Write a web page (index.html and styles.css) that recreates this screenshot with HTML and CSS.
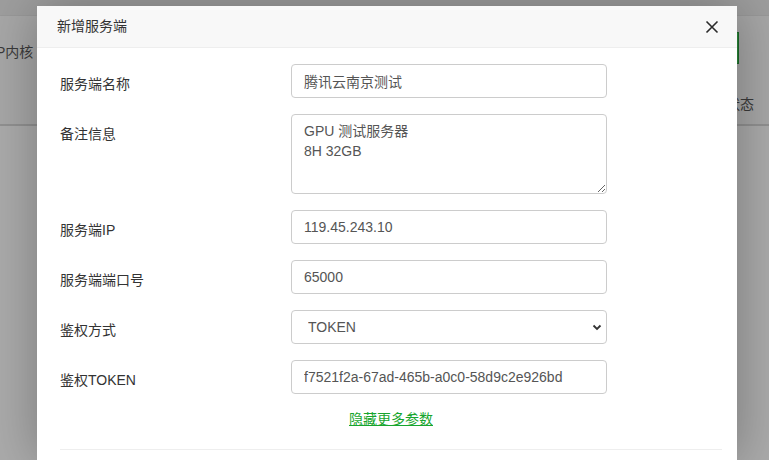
FILE: index.html
```html
<!DOCTYPE html>
<html lang="zh-CN">
<head>
<meta charset="utf-8">
<title>新增服务端</title>
<link rel="stylesheet" href="styles.css">
</head>
<body>
<div class="page">
  <div class="topbar"></div>
  <div class="pagehead">
    <span class="col-left">IP内核</span>
    <div class="head-right">
      <span class="green-btn"></span>
      <span class="col-right">状态</span>
    </div>
  </div>
  <div class="pagerest"></div>
</div>

<div class="modal">
  <div class="modal-title">
    <span>新增服务端</span>
    <button class="close" type="button" aria-label="关闭">
      <svg width="14" height="14" viewBox="0 0 14 14"><path d="M1.5 1.5 L12.5 12.5 M12.5 1.5 L1.5 12.5" stroke="#2b2b2b" stroke-width="1.6" fill="none"/></svg>
    </button>
  </div>
  <div class="modal-body">
    <div class="row">
      <label class="lbl">服务端名称</label>
      <input class="ctl" type="text" value="腾讯云南京测试">
    </div>
    <div class="row">
      <label class="lbl">备注信息</label>
      <textarea class="ctl area">GPU 测试服务器
8H 32GB</textarea>
    </div>
    <div class="row">
      <label class="lbl">服务端IP</label>
      <input class="ctl" type="text" value="119.45.243.10">
    </div>
    <div class="row">
      <label class="lbl">服务端端口号</label>
      <input class="ctl" type="text" value="65000">
    </div>
    <div class="row">
      <label class="lbl">鉴权方式</label>
      <div class="sel-wrap">
        <select class="ctl sel"><option>TOKEN</option></select>
        <svg class="chev" width="10" height="7" viewBox="0 0 10 7"><path d="M1.5 1.5 L5 5 L8.5 1.5" stroke="#333" stroke-width="1.8" fill="none"/></svg>
      </div>
    </div>
    <div class="row">
      <label class="lbl">鉴权TOKEN</label>
      <input class="ctl" type="text" value="f7521f2a-67ad-465b-a0c0-58d9c2e926bd">
    </div>
    <div class="more"><a href="#">隐藏更多参数</a></div>
    <div class="divider"></div>
  </div>
</div>
</body>
</html>
```
FILE: styles.css
```css
html, body {
  margin: 0;
  padding: 0;
  height: 100%;
  overflow: hidden;
}
body {
  font-family: "Liberation Sans", "Noto Sans CJK SC", sans-serif;
  font-size: 14px;
  color: #333;
  background: #ababab;
  position: relative;
}
.page {
  display: flex;
  flex-direction: column;
  height: 460px;
}
.topbar {
  height: 15px;
  background: #9e9e9e;
  border-bottom: 1px solid #999;
}
.pagehead {
  height: 108px;
  background: #a7a7a7;
  border-bottom: 2px solid #919191;
  display: flex;
  justify-content: space-between;
  position: relative;
}
.col-left {
  margin-left: -8px;
  margin-top: 26px;
  font-size: 14px;
  line-height: 20px;
  color: #3a3a3a;
}
.head-right {
  display: flex;
  flex-direction: column;
  align-items: flex-end;
  width: 60px;
}
.green-btn {
  display: block;
  width: 30px;
  height: 30px;
  margin-top: 16px;
  margin-right: 30px;
  border: 1px solid #1d6b2a;
  background: #2a8a3a;
}
.col-right {
  margin-top: 30px;
  margin-right: 15px;
  font-size: 14px;
  line-height: 20px;
  color: #3a3a3a;
}
.pagerest {
  flex: 1;
  background: #ababab;
}

.modal {
  position: absolute;
  left: 37px;
  top: 6px;
  width: 700px;
  height: 454px;
  overflow: hidden;
  background: #fff;
  box-shadow: 1px 1px 50px rgba(0, 0, 0, 0.3);
}
.modal-title {
  height: 41px;
  line-height: 41px;
  background: #f8f8f8;
  border-bottom: 1px solid #eee;
  padding: 0 0 0 20px;
  display: flex;
  justify-content: space-between;
  align-items: center;
  color: #333;
  font-size: 14px;
}
.close {
  border: 0;
  background: none;
  padding: 0;
  margin-right: 18px;
  width: 14px;
  height: 14px;
  display: flex;
  margin-top: 1px;
}
.modal-body {
  padding: 16px 15px 0 23px;
}
.row {
  display: grid;
  grid-template-columns: 231px 316px;
  margin-bottom: 16px;
}
.lbl {
  padding-top: 10px;
  line-height: 20px;
  color: #333;
}
.ctl {
  box-sizing: border-box;
  width: 316px;
  height: 34px;
  padding: 6px 12px;
  font-family: "Liberation Sans", "Noto Sans CJK SC", sans-serif;
  font-size: 14px;
  line-height: 20px;
  color: #555;
  background: #fff;
  border: 1px solid #ccc;
  border-radius: 4px;
  margin: 0;
  outline: none;
}
.area {
  height: 80px;
  resize: vertical;
  display: block;
}
.sel-wrap {
  position: relative;
  width: 316px;
}
.sel {
  appearance: none;
  -webkit-appearance: none;
  padding-left: 16px;
  display: block;
}
.chev {
  position: absolute;
  right: 5px;
  top: 14px;
  pointer-events: none;
}
.more {
  text-align: center;
  line-height: 20px;
  margin-top: -1px;
}
.more a {
  color: #17a52e;
  text-decoration: underline;
}
.divider {
  margin-top: 20px;
  border-top: 1px solid #eee;
}
```
